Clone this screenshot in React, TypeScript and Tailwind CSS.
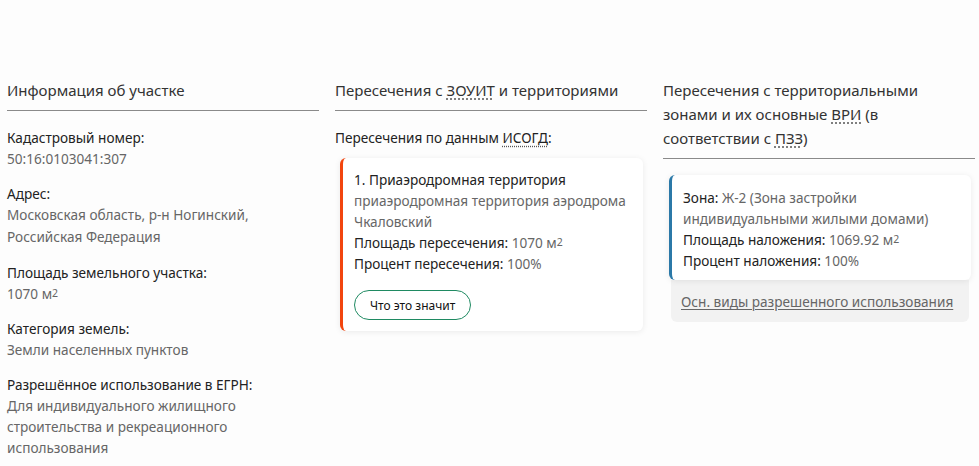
import React from 'react';

const Abbr = ({ children }: { children: React.ReactNode }) => (
    <span className="underline decoration-dotted decoration-[#555] underline-offset-[3px]">{children}</span>
);

const Field = ({ label, children }: { label: string; children: React.ReactNode }) => (
    <div>
        <div className="text-[#222]">{label}:</div>
        <div className="text-[#666]">{children}</div>
    </div>
);

const Sq = () => <sup className="text-[10.5px] relative -top-[2px]">2</sup>;

export default function App() {
    return (
        <div
            className="min-h-[466px] bg-[#fdfdfd] pt-[78px] px-[7px] text-[13.6px] leading-[21px]"
            style={{ fontFamily: '"Noto Sans", "Open Sans", sans-serif' }}
        >
            <div className="grid grid-cols-3 gap-[16px] w-[968px]">
                {/* Участок */}
                <div>
                    <h3 className="text-[15px] leading-[24px] text-[#333] pb-[8px] border-b border-[#8a8a8a]">
                        Информация об участке
                    </h3>
                    <div className="flex flex-col gap-[14px] mt-[16px]">
                        <Field label="Кадастровый номер">50:16:0103041:307</Field>
                        <Field label="Адрес">
                            <span className="leading-[22px] block">Московская область, р-н Ногинский, Российская Федерация</span>
                        </Field>
                        <Field label="Площадь земельного участка">
                            1070 м<Sq />
                        </Field>
                        <Field label="Категория земель">Земли населенных пунктов</Field>
                        <Field label="Разрешённое использование в ЕГРН">
                            Для индивидуального жилищного строительства и рекреационного использования
                        </Field>
                    </div>
                </div>

                {/* ЗОУИТ */}
                <div>
                    <h3 className="text-[15px] leading-[24px] text-[#333] pb-[8px] border-b border-[#8a8a8a]">
                        Пересечения с <Abbr>ЗОУИТ</Abbr> и территориями
                    </h3>
                    <div className="mt-[16px] text-[#222]">
                        Пересечения по данным <Abbr>ИСОГД</Abbr>:
                    </div>
                    <div className="mt-[10px] ml-[5px] mr-[4px] rounded-[6px] border-l-[3px] border-[#f2450e] bg-white shadow-[0_1px_6px_rgba(0,0,0,0.08)] pl-[11px] pr-[10px] pt-[11px] pb-[11px]">
                        <div className="text-[#222]">1. Приаэродромная территория</div>
                        <div className="text-[#666]">приаэродромная территория аэродрома Чкаловский</div>
                        <div className="text-[#222]">
                            Площадь пересечения: <span className="text-[#666]">1070 м<Sq /></span>
                        </div>
                        <div className="text-[#222]">
                            Процент пересечения: <span className="text-[#666]">100%</span>
                        </div>
                        <button className="mt-[16px] h-[30px] px-[15px] rounded-full border border-[#1f8a62] bg-white text-[12px] text-[#111]">
                            Что это значит
                        </button>
                    </div>
                </div>

                {/* Зоны */}
                <div>
                    <h3 className="text-[15px] leading-[24px] text-[#333] pb-[8px] border-b border-[#8a8a8a]">
                        Пересечения с территориальными зонами и их основные <Abbr>ВРИ</Abbr> (в соответствии с <Abbr>ПЗЗ</Abbr>)
                    </h3>
                    <div className="mt-[16px] ml-[6px] mr-[4px]">
                        <div className="relative z-10 rounded-[6px] border-l-[3px] border-[#2b79a8] bg-white shadow-[0_1px_6px_rgba(0,0,0,0.08)] pl-[11px] pr-[10px] pt-[12px] pb-[9px] leading-[21px]">
                            <div className="text-[#222]">
                                Зона: <span className="text-[#666]">Ж-2 (Зона застройки индивидуальными жилыми домами)</span>
                            </div>
                            <div className="text-[#222]">
                                Площадь наложения: <span className="text-[#666]">1069.92 м<Sq /></span>
                            </div>
                            <div className="text-[#222]">
                                Процент наложения: <span className="text-[#666]">100%</span>
                            </div>
                        </div>
                        <div className="mx-[2px] rounded-b-[6px] bg-[#f2f2f2] px-[10px] pt-[11px] pb-[10px]">
                            <a className="text-[#666] underline underline-offset-[2px] whitespace-nowrap" href="#">
                                Осн. виды разрешенного использования
                            </a>
                        </div>
                    </div>
                </div>
            </div>
        </div>
    );
}
